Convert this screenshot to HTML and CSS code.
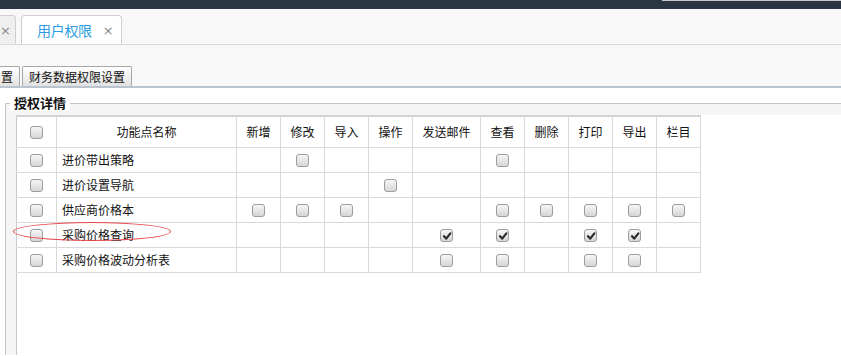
FILE: index.html
```html
<!DOCTYPE html>
<html lang="zh">
<head>
<meta charset="utf-8">
<link rel="stylesheet" href="styles.css">
</head>
<body>
<div class="topbar"><div class="topbar-edge"></div></div>
<div class="tabs">
  <div class="tab tab-partial"><span class="tab-close">×</span></div>
  <div class="tab tab-active"><span class="tab-title">用户权限</span><span class="tab-close">×</span></div>
</div>
<div class="toolbar">
  <div class="btn btn-partial">置</div>
  <div class="btn">财务数据权限设置</div>
</div>
<fieldset class="group">
  <legend class="group-title">授权详情</legend>
  <div class="panel">
    <table class="grid">
      <colgroup>
        <col class="c-chk"><col class="c-name"><col class="c-s"><col class="c-s"><col class="c-s"><col class="c-s"><col class="c-m"><col class="c-s"><col class="c-s"><col class="c-s"><col class="c-s"><col class="c-s">
      </colgroup>
      <thead>
        <tr>
          <th><span class="cb"></span></th>
          <th>功能点名称</th><th>新增</th><th>修改</th><th>导入</th><th>操作</th><th>发送邮件</th><th>查看</th><th>删除</th><th>打印</th><th>导出</th><th>栏目</th>
        </tr>
      </thead>
      <tbody>
        <tr>
          <td><span class="cb"></span></td><td class="name">进价带出策略</td>
          <td></td><td><span class="cb"></span></td><td></td><td></td><td></td><td><span class="cb"></span></td><td></td><td></td><td></td><td></td>
        </tr>
        <tr>
          <td><span class="cb"></span></td><td class="name">进价设置导航</td>
          <td></td><td></td><td></td><td><span class="cb"></span></td><td></td><td></td><td></td><td></td><td></td><td></td>
        </tr>
        <tr>
          <td><span class="cb"></span></td><td class="name">供应商价格本</td>
          <td><span class="cb"></span></td><td><span class="cb"></span></td><td><span class="cb"></span></td><td></td><td></td><td><span class="cb"></span></td><td><span class="cb"></span></td><td><span class="cb"></span></td><td><span class="cb"></span></td><td><span class="cb"></span></td>
        </tr>
        <tr>
          <td><span class="cb"></span></td><td class="name">采购价格查询</td>
          <td></td><td></td><td></td><td></td>
          <td><span class="cb cb-on"><svg viewBox="0 0 12 12" width="12" height="12"><path d="M3 6.2 L5.2 8.6 L9.4 3.4" fill="none" stroke="#2b2b2b" stroke-width="2.2" stroke-linecap="round" stroke-linejoin="round"/></svg></span></td>
          <td><span class="cb cb-on"><svg viewBox="0 0 12 12" width="12" height="12"><path d="M3 6.2 L5.2 8.6 L9.4 3.4" fill="none" stroke="#2b2b2b" stroke-width="2.2" stroke-linecap="round" stroke-linejoin="round"/></svg></span></td>
          <td></td>
          <td><span class="cb cb-on"><svg viewBox="0 0 12 12" width="12" height="12"><path d="M3 6.2 L5.2 8.6 L9.4 3.4" fill="none" stroke="#2b2b2b" stroke-width="2.2" stroke-linecap="round" stroke-linejoin="round"/></svg></span></td>
          <td><span class="cb cb-on"><svg viewBox="0 0 12 12" width="12" height="12"><path d="M3 6.2 L5.2 8.6 L9.4 3.4" fill="none" stroke="#2b2b2b" stroke-width="2.2" stroke-linecap="round" stroke-linejoin="round"/></svg></span></td>
          <td></td>
        </tr>
        <tr>
          <td><span class="cb"></span></td><td class="name">采购价格波动分析表</td>
          <td></td><td></td><td></td><td></td><td><span class="cb"></span></td><td><span class="cb"></span></td><td></td><td><span class="cb"></span></td><td><span class="cb"></span></td><td></td>
        </tr>
      </tbody>
    </table>
    <div class="mark"></div>
  </div>
</fieldset>
</body>
</html>
```

FILE: styles.css
```css
html, body {
  margin: 0;
  padding: 0;
}
body {
  width: 841px;
  height: 356px;
  overflow: hidden;
  background: #ffffff;
  font-family: "Noto Sans CJK SC", "Liberation Sans", sans-serif;
  font-size: 12px;
  color: #111;
}

.topbar {
  height: 9px;
  background: #2a3642;
  display: flex;
  justify-content: flex-end;
}
.topbar-edge {
  width: 179px;
  height: 1px;
  background: #c6c8ca;
}

.tabs {
  height: 29px;
  padding-top: 6px;
  background: #f8f8f8;
  border-bottom: 1px solid #d8d8d8;
  display: flex;
  align-items: flex-end;
}
.tab {
  box-sizing: border-box;
  height: 29px;
  border: 1px solid #cfcfcf;
  border-bottom: none;
  border-radius: 4px 4px 0 0;
  display: flex;
  align-items: center;
}
.tab-partial {
  width: 22px;
  margin-left: -6px;
  background: #efefef;
  padding-left: 5px;
}
.tab-active {
  width: 101px;
  margin-left: 5px;
  background: #ffffff;
  padding-left: 15px;
}
.tab-title {
  font-size: 14px;
  color: #2a9be0;
  letter-spacing: -0.3px;
}
.tab-close {
  color: #8a8a8a;
  font-family: "DejaVu Sans", sans-serif;
  font-size: 13px;
  line-height: 1;
}
.tab-active .tab-close {
  margin-left: 11px;
}

.toolbar {
  height: 41px;
  background: #f8f8f8;
  border-bottom: 2px solid #b9c4cf;
  display: flex;
  align-items: flex-end;
  gap: 2px;
}
.btn {
  box-sizing: border-box;
  height: 20px;
  padding: 0 6px;
  border: 1px solid #a8a8a8;
  border-bottom: none;
  border-radius: 2px 2px 0 0;
  background: linear-gradient(#ffffff, #e2e2e2);
  line-height: 19px;
  font-size: 12px;
  color: #111;
  white-space: nowrap;
}
.btn-partial {
  margin-left: -9px;
  padding-left: 9px;
}

.group {
  margin: 7px 0 0 5px;
  padding: 0 0 0 10px;
  border: 1px solid #c4c4c4;
  border-right: none;
  border-bottom: none;
  background: #f5f5f5;
  box-sizing: border-box;
}
.group-title {
  margin-left: -6px;
  padding: 0 4px;
  font-size: 13px;
  font-weight: bold;
  color: #111;
  background: #ffffff;
  line-height: 16px;
}
.panel {
  position: relative;
  margin-top: 4px;
  height: 240px;
  background: #ffffff;
  border-left: 1px solid #c8c8c8;
}

.grid {
  border-collapse: collapse;
  table-layout: fixed;
  width: 684px;
  margin-left: -1px;
  border-top: 2px solid #d4d4d4;
}
.c-chk { width: 40px; }
.c-name { width: 180px; }
.c-s { width: 44px; }
.c-m { width: 68px; }

.grid th, .grid td {
  border: 1px solid #d9d9d9;
  padding: 0;
  text-align: center;
  vertical-align: middle;
  font-weight: normal;
  font-size: 12px;
  color: #111;
}
.grid th:first-child, .grid td:first-child {
  border-left: 1px solid #c8c8c8;
}
.grid thead tr { height: 31px; }
.grid tbody tr { height: 25px; }
.grid td.name {
  text-align: left;
  padding-left: 5px;
}

.cb {
  display: inline-block;
  box-sizing: border-box;
  width: 13px;
  height: 13px;
  border: 1px solid #9d9d9d;
  border-radius: 3px;
  background: linear-gradient(#f6f6f6, #d6d6d6);
  vertical-align: middle;
  position: relative;
  top: -1px;
}
.cb svg {
  display: block;
  margin: 0;
}

.mark {
  position: absolute;
  left: -4px;
  top: 107px;
  width: 158px;
  height: 19px;
  border: 1px solid #e8474a;
  border-radius: 50%;
  box-sizing: border-box;
}
```
